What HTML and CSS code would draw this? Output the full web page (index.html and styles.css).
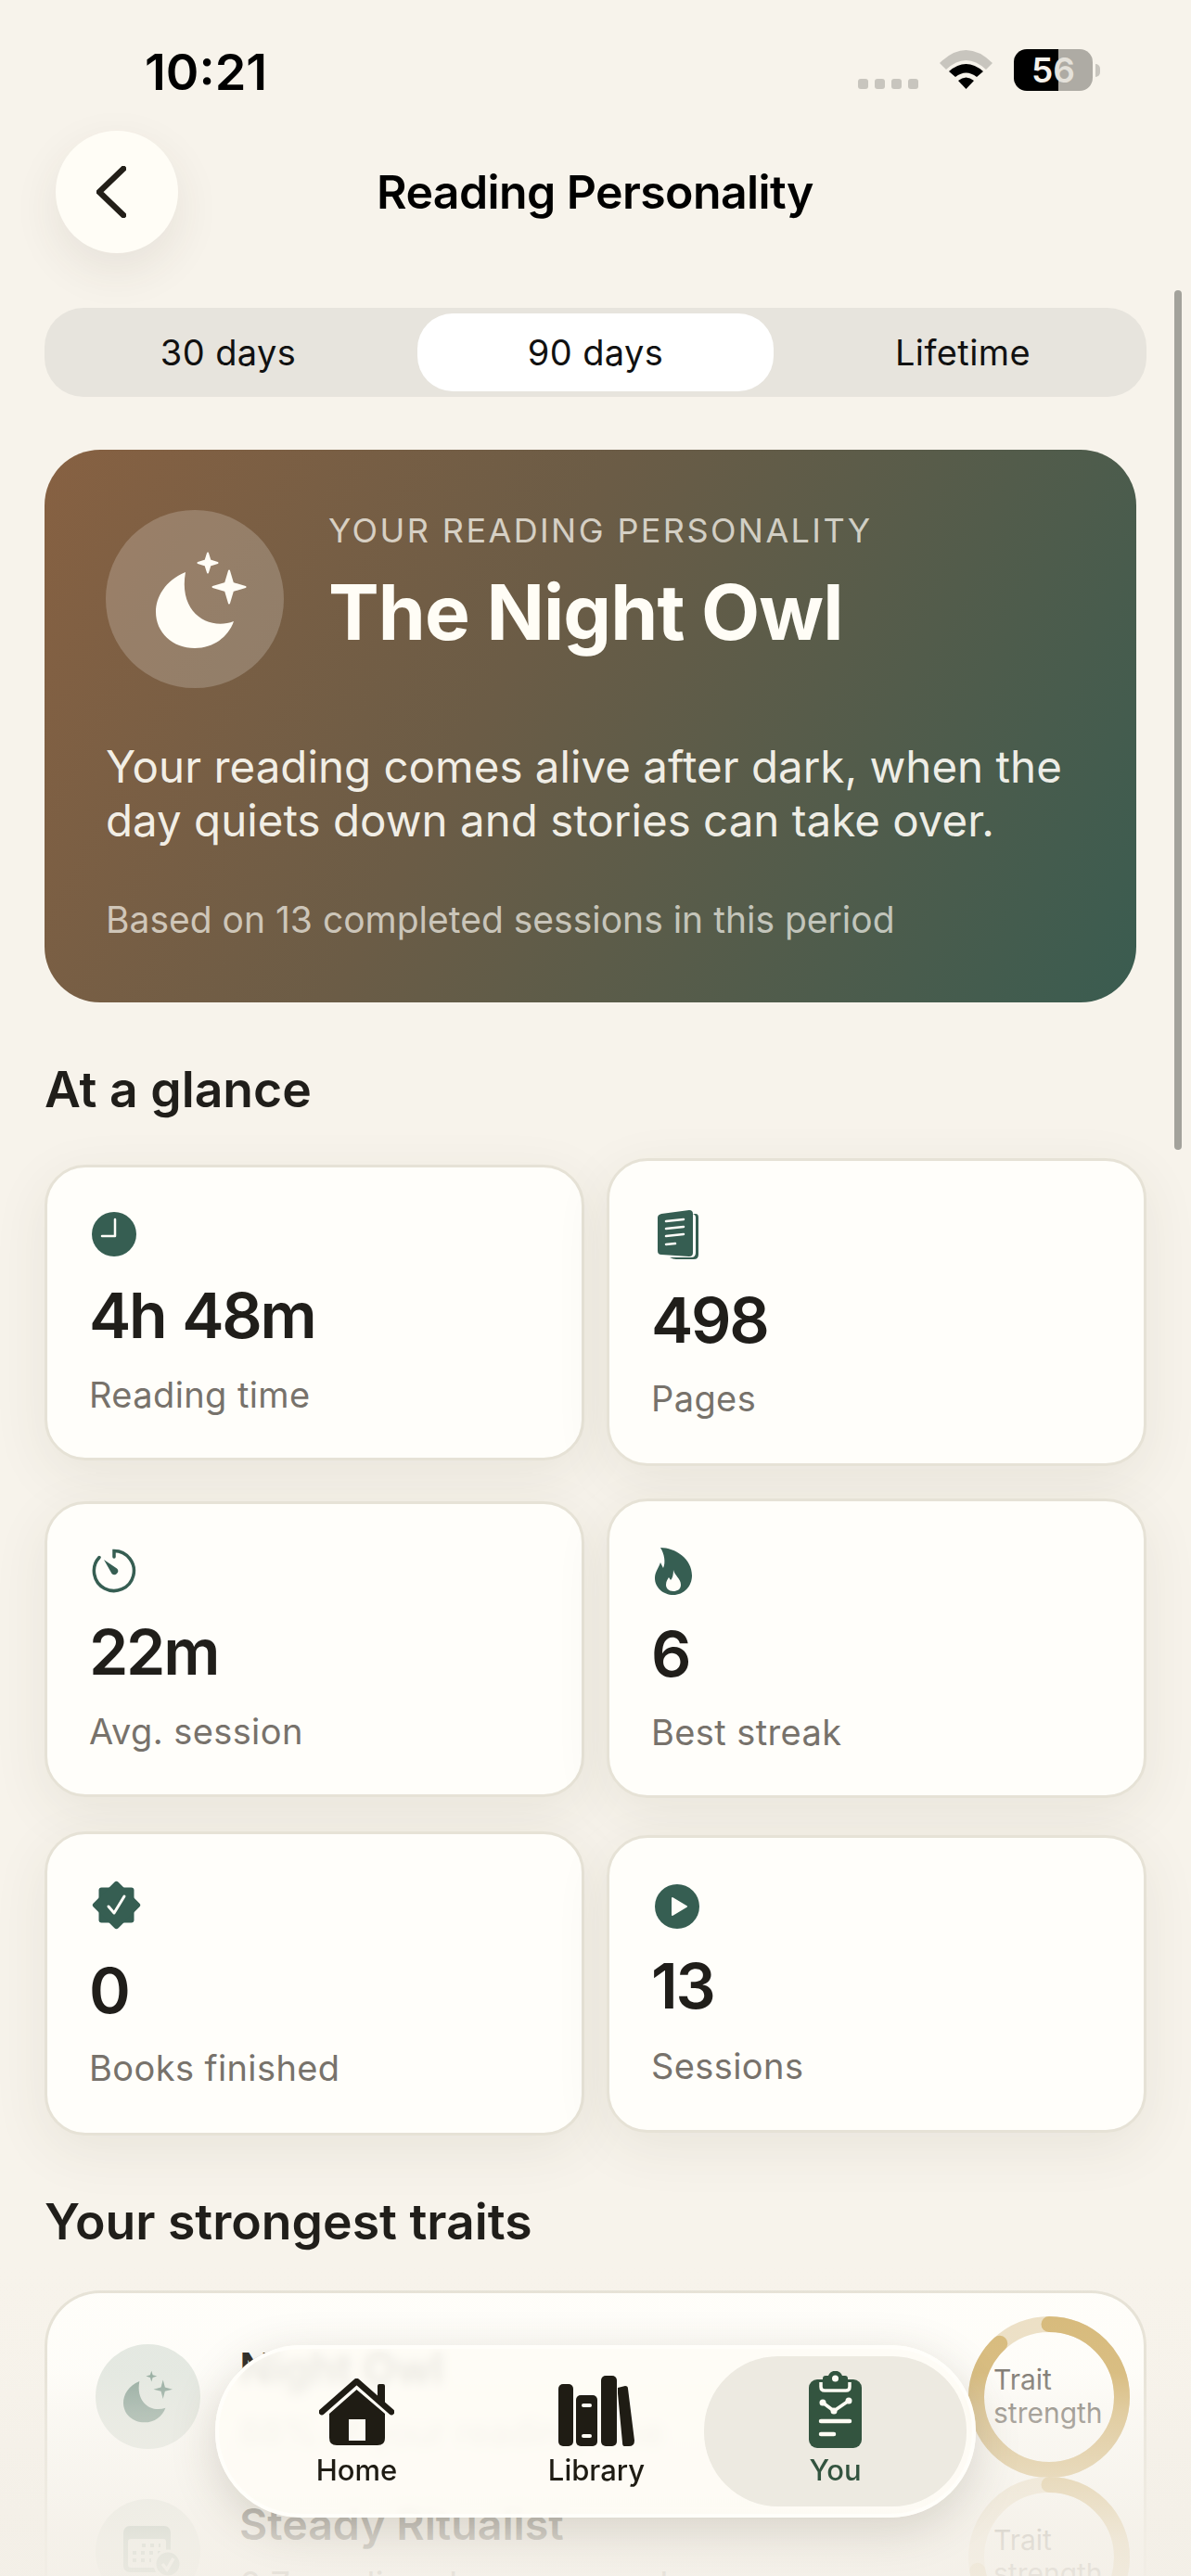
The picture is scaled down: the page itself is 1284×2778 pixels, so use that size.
FILE: index.html
```html
<!DOCTYPE html>
<html lang="en">
<head>
    <meta charset="UTF-8">
    <meta name="viewport" content="width=device-width, initial-scale=1.0">
    <title>Reading Personality</title>
    <link rel="stylesheet" href="styles.css">
</head>
<body>
    <div class="screen">
        <div class="status">
            <span class="clock">10:21</span>
            <div class="status-right">
                <div class="signal"><i></i><i></i><i></i><i></i></div>
                <svg class="wifi" width="57" height="42" viewBox="0 0 57 42">
                    <path fill="#c8c5be" d="M0 14Q28.500 -14 57 14L50 21Q28.500 1 7 21Z"/>
                    <path fill="#000" d="M10 23Q28.500 7 47 23L40 29Q28.500 20 17 29Z"/>
                    <path fill="#000" d="M20 33Q28.500 26 37 33L28.500 42Z"/>
                </svg>
                <div class="battery">
                    <div class="battery-body"><span>5</span><span class="dim">6</span></div>
                    <div class="battery-cap"></div>
                </div>
            </div>
        </div>

        <div class="topbar">
            <button class="back">
                <svg width="32" height="56" viewBox="0 0 32 56"><path d="M29 3L3 28L29 53" fill="none" stroke="#231f18" stroke-width="6.500" stroke-linecap="round" stroke-linejoin="round"/></svg>
            </button>
            <h1>Reading Personality</h1>
        </div>

        <div class="tabs">
            <span>30 days</span>
            <span class="on">90 days</span>
            <span>Lifetime</span>
        </div>

        <div class="hero">
            <div class="hero-top">
                <div class="hero-icon">
                    <svg width="192" height="192" viewBox="0 0 192 192" fill="#fffdf6" stroke="#fffdf6" stroke-linejoin="round">
                        <path stroke="none" d="M86 67C64 76 54 94 54 110C54 132 72 149 96 149C116 149 132 137 138 120C112 130 78 112 86 67Z"/>
                        <path stroke-width="2" d="M133 65.500L137 79L150.500 83L137 87L133 100.500L129 87L115.500 83L129 79Z"/>
                        <path stroke-width="2" d="M110 46.500L112.500 54.500L120.500 57L112.500 59.500L110 67.500L107.500 59.500L99.500 57L107.500 54.500Z"/>
                    </svg>
                </div>
                <div>
                    <div class="hero-label">YOUR READING PERSONALITY</div>
                    <div class="hero-title">The Night Owl</div>
                </div>
            </div>
            <p class="hero-text">Your reading comes alive after dark, when the day quiets down and stories can take over.</p>
            <p class="hero-note">Based on 13 completed sessions in this period</p>
        </div>

        <h2 class="glance">At a glance</h2>

        <div class="stats">
            <div class="col col-left">
                <div class="card">
                    <svg class="ico" width="48" height="48" viewBox="0 0 48 48"><circle cx="24" cy="24" r="24" fill="#365e52"/><path d="M25 8V26H11" fill="none" stroke="#fffef9" stroke-width="2.500" stroke-linecap="round" stroke-linejoin="round"/></svg>
                    <div class="val">4h 48m</div>
                    <div class="lab">Reading time</div>
                </div>
                <div class="card">
                    <svg class="ico" width="48" height="48" viewBox="0 0 48 48"><path d="M24 9V2.500A21.500 21.500 0 1 1 8 9.500" fill="none" stroke="#365e52" stroke-width="3.500" stroke-linecap="round"/><path fill="#365e52" d="M13 12L27 21.500A3.800 3.800 0 0 1 21.500 27Z"/></svg>
                    <div class="val">22m</div>
                    <div class="lab">Avg. session</div>
                </div>
                <div class="card">
                    <svg class="ico" width="53" height="53" viewBox="0 0 53 53"><g fill="#365e52"><rect x="7.500" y="7.500" width="38" height="38" rx="3"/><rect x="7.500" y="7.500" width="38" height="38" rx="3" transform="rotate(45 26.500 26.500)"/></g><path d="M18 28L24 35L35 17" fill="none" stroke="#fffef9" stroke-width="3" stroke-linecap="round" stroke-linejoin="round"/></svg>
                    <div class="val">0</div>
                    <div class="lab">Books finished</div>
                </div>
            </div>
            <div class="col col-right">
                <div class="card">
                    <svg class="ico" width="44" height="54" viewBox="0 0 44 54"><path fill="#365e52" d="M38 4L41 4Q44 4 44 8V48Q44 53 39 53H20Q17 53 13 51H36Q41 51 41 46V8Q41 5 38 4Z"/><path fill="#365e52" d="M4 4L34 0Q38 0 38 4V46Q38 50 34 50L4 48Q0 48 0 44V8Q0 5 4 4Z"/><path d="M9 12L28 10M9 20L28 18M9 28L28 26M9 37L19 36" stroke="#fffef9" stroke-width="2.500" stroke-linecap="round"/></svg>
                    <div class="val">498</div>
                    <div class="lab">Pages</div>
                </div>
                <div class="card">
                    <svg class="ico" width="40" height="51" viewBox="0 0 40 51"><path fill="#365e52" d="M6 0C22 0 40 12 40 30C40 42 31 51 20 51C9 51 0 43 0 33C0 26 4 22 6 16L9 22C12 16 10 6 6 0Z"/><path fill="#fffef9" d="M20 24C21 30 28 33 28 40C28 45 24 47 20 47C15 47 12 44 12 40C12 36 14 34 15 32L17 35C19 33 20 29 20 24Z"/></svg>
                    <div class="val">6</div>
                    <div class="lab">Best streak</div>
                </div>
                <div class="card">
                    <svg class="ico" width="48" height="48" viewBox="0 0 48 48"><circle cx="24" cy="24" r="24" fill="#365e52"/><path d="M19 15L34 24L19 33Z" fill="#fffef9" stroke="#fffef9" stroke-width="2" stroke-linejoin="round"/></svg>
                    <div class="val">13</div>
                    <div class="lab">Sessions</div>
                </div>
            </div>
        </div>

        <h2 class="strong">Your strongest traits</h2>

        <div class="traits">
            <div class="trait">
                <div class="trait-icon">
                    <svg width="113" height="113" viewBox="-1.500 -7 209 209" fill="#8fa79b"><path d="M86 67C64 76 54 94 54 110C54 132 72 149 96 149C116 149 132 137 138 120C112 130 78 112 86 67Z"/><path d="M133 64L137 79L152 83L137 87L133 102L129 87L114 83L129 79Z"/><path d="M110 46L112.500 54.500L121 57L112.500 59.500L110 68L107.500 59.500L99 57L107.500 54.500Z"/></svg>
                </div>
                <div class="trait-text">
                    <div class="trait-name">Night Owl</div>
                    <div class="trait-sub">88% of your reading time</div>
                </div>
                <div class="ring">
                    <svg width="174" height="174" viewBox="0 0 174 174"><circle cx="87" cy="87" r="78.500" fill="none" stroke="#ecdfc4" stroke-width="17"/><circle cx="87" cy="87" r="78.500" fill="none" stroke="#d6b877" stroke-width="17" stroke-linecap="round" stroke-dasharray="434 493" transform="rotate(-90 87 87)"/></svg>
                    <span>Trait strength</span>
                </div>
            </div>
            <div class="trait">
                <div class="trait-icon">
                    <svg class="cal" width="62" height="56" viewBox="0 0 62 56"><rect x="0" y="0" width="51" height="50" rx="7" fill="#8fa79b"/><rect x="5" y="14" width="41" height="31" rx="3" fill="#e3e8e1"/><path d="M20 21H40M10 29H40M10 37H30" stroke="#8fa79b" stroke-width="4" stroke-dasharray="4 5"/><circle cx="48" cy="41" r="14" fill="#8fa79b" stroke="#e3e8e1" stroke-width="3"/><path d="M42 41L47 47L54 35" fill="none" stroke="#e3e8e1" stroke-width="3.500"/></svg>
                </div>
                <div class="trait-text">
                    <div class="trait-name">Steady Ritualist</div>
                    <div class="trait-sub">0.7 reading days per week</div>
                </div>
                <div class="ring">
                    <svg width="174" height="174" viewBox="0 0 174 174"><circle cx="87" cy="87" r="78.500" fill="none" stroke="#ecdfc4" stroke-width="17"/><circle cx="87" cy="87" r="78.500" fill="none" stroke="#d6b877" stroke-width="17" stroke-linecap="round" stroke-dasharray="355 493" transform="rotate(-90 87 87)"/></svg>
                    <span>Trait strength</span>
                </div>
            </div>
        </div>

        <div class="fade"></div>
        <div class="scrollbar"></div>

        <nav class="tabbar">
            <div class="tabitem">
                <svg width="81" height="72" viewBox="0 0 81 72">
                    <path d="M3 36L40.500 3L78 36" fill="none" stroke="#1f1c14" stroke-width="6.500" stroke-linecap="round" stroke-linejoin="round"/>
                    <path fill="#1f1c14" d="M63 8Q63 6 65 6H69Q71 6 71 8V27L63 20Z"/>
                    <path fill="#1f1c14" fill-rule="evenodd" d="M40.500 12L71 38V64Q71 72 63 72H19Q11 72 11 64V38ZM32 44V67H50V44Z"/>
                </svg>
                <span>Home</span>
            </div>
            <div class="tabitem">
                <svg width="82" height="76" viewBox="0 0 82 76">
                    <rect x="0" y="9" width="16" height="67" rx="5" fill="#1f1c14"/>
                    <rect x="19" y="21" width="23" height="55" rx="5" fill="#1f1c14"/>
                    <rect x="25" y="30" width="11" height="4" rx="2" fill="#fefcf5"/>
                    <rect x="25" y="63" width="11" height="4" rx="2" fill="#fefcf5"/>
                    <rect x="46" y="0" width="17" height="76" rx="5" fill="#1f1c14"/>
                    <path fill="#1f1c14" d="M64 13L72 11Q75 11 75 14L82 70Q82 76 76 76H71Q69 76 69 72L64 19Z"/>
                </svg>
                <span>Library</span>
            </div>
            <div class="tabitem on">
                <svg width="57" height="83" viewBox="0 0 57 83">
                    <rect x="0" y="9" width="57" height="74" rx="9" fill="#33543f"/>
                    <path d="M13 12V17Q13 21 17 21H40Q44 21 44 17V12" fill="none" stroke="#fffcf4" stroke-width="3.500"/>
                    <path fill="#33543f" d="M15 8Q15 5 18 5H21A8 8 0 0 1 36 5H39Q42 5 42 8V15Q42 18 39 18H18Q15 18 15 15Z"/>
                    <circle cx="28.500" cy="8" r="3.500" fill="#fffcf4"/>
                    <path d="M15 34L27 43L43 32" fill="none" stroke="#fffcf4" stroke-width="3.500" stroke-linejoin="round"/>
                    <circle cx="15" cy="34" r="3.500" fill="#fffcf4"/><circle cx="27" cy="43" r="3.500" fill="#fffcf4"/><circle cx="43" cy="32" r="3.500" fill="#fffcf4"/>
                    <path d="M13 54H44M13 68H27" stroke="#fffcf4" stroke-width="4.500" stroke-linecap="round"/>
                </svg>
                <span>You</span>
            </div>
        </nav>
    </div>
</body>
</html>
```

FILE: styles.css
```css
* {
    margin: 0;
    padding: 0;
    box-sizing: border-box;
}

body {
    background-color: #f7f3eb;
    color: #201e1a;
    font-family: Inter, "Noto Sans", sans-serif;
}

.screen {
    position: relative;
    width: 1284px;
    height: 2778px;
    overflow: hidden;
}

/* status bar */
.status {
    height: 141px;
    padding: 53px 98px 0 156px;
    display: flex;
    justify-content: space-between;
    align-items: flex-start;
}

.clock {
    font-size: 54px;
    font-weight: 600;
    line-height: 46px;
    margin-top: 2px;
    color: #000;
}

.status-right {
    display: flex;
    align-items: flex-end;
    height: 45px;
}

.signal {
    display: flex;
    gap: 7px;
    margin-right: 23px;
    margin-bottom: 2px;
}

.signal i {
    width: 11px;
    height: 11px;
    border-radius: 3px;
    background-color: #c8c5be;
}

.wifi {
    margin-right: 23px;
    margin-bottom: 2px;
}

.battery {
    display: flex;
    align-items: center;
}

.battery-body {
    width: 85px;
    height: 45px;
    border-radius: 14px;
    background: linear-gradient(90deg, #000 48px, #aeaba4 48px);
    display: flex;
    align-items: center;
    justify-content: center;
    color: #f6f2eb;
    font-size: 37px;
    font-weight: 600;
}

.battery-body .dim {
    color: #e4e1da;
}

.battery-cap {
    width: 5px;
    height: 14px;
    margin-left: 3px;
    border-radius: 0 5px 5px 0;
    background-color: #c8c5be;
}

/* top bar */
.topbar {
    height: 132px;
    margin-left: 60px;
    display: flex;
    align-items: center;
}

.back {
    width: 132px;
    height: 132px;
    border: none;
    border-radius: 50%;
    background-color: #fffdf6;
    box-shadow: 0 18px 50px rgba(70, 60, 40, 0.09);
    display: flex;
    align-items: center;
    justify-content: center;
    padding-right: 12px;
}

.topbar h1 {
    font-size: 50px;
    font-weight: 600;
    color: #000;
    margin-left: 214px;
    letter-spacing: -0.6px;
}

.tabs {
    margin: 59px 48px 0;
    height: 96px;
    padding: 6px;
    border-radius: 42px;
    background-color: #e7e4dd;
    display: grid;
    grid-template-columns: 1fr 1fr 1fr;
    gap: 12px;
    font-size: 38px;
    font-weight: 400;
    letter-spacing: 0.4px;
    color: #111;
}

.tabs span {
    display: flex;
    align-items: center;
    justify-content: center;
    border-radius: 38px;
}

.tabs .on {
    background-color: #fff;
}

/* hero */
.hero {
    margin: 57px 59px 0 48px;
    height: 596px;
    border-radius: 60px;
    padding: 65px 66px 0;
    background: linear-gradient(118deg, #876142 0%, #6b5c46 42%, #3a5c50 100%);
    color: #fffdf6;
}

.hero-top {
    display: flex;
    gap: 48px;
}

.hero-icon {
    width: 192px;
    height: 192px;
    border-radius: 50%;
    background-color: rgba(255, 255, 255, 0.2);
}

.hero-label {
    font-size: 36px;
    font-weight: 400;
    letter-spacing: 2.400px;
    line-height: 42px;
    margin-top: 1px;
    color: rgba(255, 253, 246, 0.72);
}

.hero-title {
    font-size: 82px;
    font-weight: 700;
    line-height: 100px;
    margin-top: 18px;
    letter-spacing: -0.9px;
}

.hero-text {
    margin-top: 56px;
    font-size: 47.500px;
    line-height: 58px;
    color: rgba(255, 253, 246, 0.92);
}

.hero-note {
    margin-top: 55px;
    font-size: 39px;
    line-height: 46px;
    color: rgba(255, 253, 246, 0.66);
}

h2 {
    font-weight: 600;
    font-size: 53.500px;
    line-height: 64px;
    margin-left: 48px;
    color: #201e1a;
}

.glance {
    margin-top: 62px;
}

/* stat cards */
.stats {
    display: grid;
    grid-template-columns: 582px 582px;
    gap: 24px;
    margin: 0 48px;
}

.col {
    display: flex;
    flex-direction: column;
}

.card {
    background-color: #fffefa;
    border: 3px solid #e6e2d6;
    border-radius: 44px;
    box-shadow: 0 16px 60px rgba(70, 60, 40, 0.08);
    display: flex;
    flex-direction: column;
    padding-left: 45px;
}

.ico {
    margin-left: 3px;
}

.val {
    font-size: 68px;
    font-weight: 600;
    line-height: 82px;
    letter-spacing: -2.300px;
    word-spacing: 3px;
    color: #201e1a;
    margin-top: 22px;
}

.lab {
    font-size: 38px;
    line-height: 46px;
    letter-spacing: 0.4px;
    color: #77726b;
    margin-top: 22px;
}

.col-left {
    padding-top: 49px;
}

.col-left .card {
    height: 319px;
}

.col-left .card:nth-child(2) {
    margin-top: 44px;
}

.col-left .card:nth-child(3) {
    margin-top: 37px;
    height: 328px;
}

.col-left .ico {
    margin-top: 48px;
}

.col-left .card:nth-child(3) .ico {
    margin-top: 50px;
}

.col-left .card:nth-child(3) .val {
    margin-top: 24px;
}

.col-left .card:nth-child(3) .lab {
    margin-top: 20px;
}

.col-right {
    padding-top: 42px;
}

.col-right .card {
    height: 323px;
}

.col-right .ico {
    margin-top: 50px;
    margin-left: 4px;
}

.col-right .card:nth-child(1) {
    height: 332px;
}

.col-right .card:nth-child(1) .ico {
    margin-top: 53px;
    margin-left: 7px;
}

.col-right .card:nth-child(1) .val {
    margin-top: 23px;
}

.col-right .card:nth-child(1) .lab {
    margin-top: 21px;
}

.col-right .card:nth-child(2) {
    margin-top: 35px;
}

.col-right .card:nth-child(2) .lab {
    margin-top: 21px;
}

.col-right .card:nth-child(3) {
    margin-top: 40px;
    height: 321px;
}

.col-right .card:nth-child(3) .val {
    margin-top: 20px;
}

.col-right .card:nth-child(3) .lab {
    margin-top: 23px;
}

.strong {
    margin-top: 61px;
}

/* traits, mostly under the tab bar */
.traits {
    margin: 42px 48px 0;
    height: 400px;
    background-color: #fffefa;
    border: 3px solid #e6e2d6;
    border-bottom: none;
    border-radius: 60px 60px 0 0;
    padding: 25px 15px 0 52px;
}

.trait {
    height: 173px;
    display: flex;
    align-items: flex-start;
}

.trait-icon {
    width: 113px;
    height: 113px;
    margin-top: 30px;
    border-radius: 50%;
    background-color: #e3e8e1;
    display: flex;
    align-items: center;
    justify-content: center;
    flex-shrink: 0;
}

.trait-text {
    margin-left: 42px;
    flex: 1;
    padding-top: 29px;
}

.trait-name {
    font-size: 46.500px;
    font-weight: 600;
    line-height: 54px;
}

.trait-sub {
    font-size: 38px;
    line-height: 44px;
    margin-top: 20px;
    color: #77726b;
}

.trait + .trait .trait-icon {
    margin-top: 24px;
}

.trait + .trait .trait-text {
    padding-top: 24px;
}

.trait + .trait .trait-sub {
    margin-top: 16px;
}

.cal {
    margin-left: 8px;
}

.ring {
    width: 174px;
    height: 174px;
    flex-shrink: 0;
    position: relative;
}

.ring span {
    position: absolute;
    left: 27px;
    top: 50px;
    width: 130px;
    font-size: 30px;
    line-height: 36px;
    color: #77726b;
}

.fade {
    position: absolute;
    left: 0;
    right: 0;
    top: 2440px;
    height: 338px;
    background: linear-gradient(180deg, rgba(243, 239, 231, 0) 0%, rgba(243, 239, 231, 0.1) 35%, rgba(243, 239, 231, 0.38) 48%, rgba(243, 239, 231, 0.85) 88%, rgba(243, 239, 231, 0.9) 100%);
}

.scrollbar {
    position: absolute;
    left: 1266px;
    top: 313px;
    width: 8px;
    height: 927px;
    border-radius: 4px;
    background-color: #a3a29b;
}

/* floating tab bar */
.tabbar {
    position: absolute;
    left: 232px;
    top: 2529px;
    width: 820px;
    height: 186px;
    padding: 8px 6px;
    border-radius: 92px;
    border: 4px solid #fffefa;
    background-color: rgba(254, 252, 245, 0.9);
    backdrop-filter: blur(6px);
    box-shadow: 0 12px 50px rgba(70, 60, 40, 0.18);
    display: grid;
    grid-template-columns: 285px 232px 283px;
}

.tabitem {
    display: flex;
    flex-direction: column;
    align-items: center;
    justify-content: flex-end;
    gap: 9px;
    padding-bottom: 21px;
    border-radius: 80px;
    font-size: 31px;
    font-weight: 500;
    line-height: 36px;
    color: #1f1c14;
}

.tabitem:nth-child(2) svg {
    margin-bottom: -1px;
}

.tabitem.on svg {
    margin-bottom: -3px;
}

.tabitem.on {
    background-color: #edeae1;
    color: #33543f;
}
```
